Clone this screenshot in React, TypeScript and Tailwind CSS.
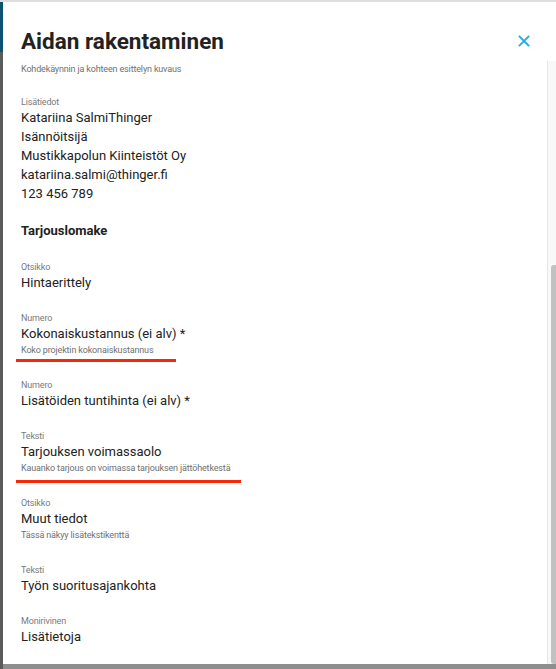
import React from 'react';

type Field = {
    label: string;
    value: string;
    helper?: string;
    mark?: string; // size/offset classes for the red annotation line
};

const fields: Field[] = [
    { label: 'Otsikko', value: 'Hintaerittely' },
    { label: 'Numero', value: 'Kokonaiskustannus (ei alv) *', helper: 'Koko projektin kokonaiskustannus', mark: 'w-[160px] bottom-[-2px]' },
    { label: 'Numero', value: 'Lisätöiden tuntihinta (ei alv) *' },
    { label: 'Teksti', value: 'Tarjouksen voimassaolo', helper: 'Kauanko tarjous on voimassa tarjouksen jättöhetkestä', mark: 'w-[225px] bottom-[-5px]' },
    { label: 'Otsikko', value: 'Muut tiedot', helper: 'Tässä näkyy lisätekstikenttä' },
    { label: 'Teksti', value: 'Työn suoritusajankohta' },
    { label: 'Monirivinen', value: 'Lisätietoja' },
];

const small = 'text-[9px] tracking-[-0.15px]';

const CloseIcon: React.FC<{ className?: string }> = ({ className }) => (
    <svg viewBox="0 0 12 12" className={className} fill="none" stroke="currentColor" strokeWidth="1.8" strokeLinecap="square">
        <path d="M1.5 1.5l9 9M10.5 1.5l-9 9" />
    </svg>
);

const FieldRow: React.FC<{ field: Field }> = ({ field }) => (
    <div className="relative flex flex-col mb-[19px]">
        <div className={`${small} leading-[12px] text-[#7a7a7a]`}>{field.label}</div>
        <div className="text-[13px] leading-[20px] text-[#222]">{field.value}</div>
        {field.helper && (
            <div className={`${small} leading-[13px] mb-[3px] text-[#6f6f6f]`}>{field.helper}</div>
        )}
        {field.mark && (
            <div className={`absolute left-[-5px] h-[3px] bg-[#f5290a] ${field.mark}`} />
        )}
    </div>
);

export default function App() {
    return (
        <div className="w-[556px] h-[669px] bg-[#8e8e8e] flex flex-col overflow-hidden font-['Roboto',sans-serif]">
            <div className="h-[2px] bg-[#dedede] shrink-0" />
            <div className="flex flex-1 min-h-0">
                <div className="w-[3px] flex flex-col shrink-0">
                    <div className="h-[50px] bg-[#0d5270]" />
                    <div className="flex-1 bg-[#5b5b5b]" />
                </div>
                <div className="flex-1 flex flex-col bg-white mb-[5px] min-w-0">
                    <div className="h-[59px] shrink-0 flex items-end justify-between pl-[18px] pr-[26px] pb-[6px]">
                        <h1 className="text-[22.5px] leading-[28px] font-bold text-[#222]">Aidan rakentaminen</h1>
                        <CloseIcon className="w-[12px] h-[12px] text-[#2aa8e2] mb-[8px]" />
                    </div>
                    <div className="flex flex-1 min-h-0">
                        <div className="flex-1 overflow-hidden pl-[18px] pt-[2px]">
                            <div className={`${small} leading-[12px] text-[#6f6f6f]`}>
                                Kohdekäynnin ja kohteen esittelyn kuvaus
                            </div>
                            <div className="mt-[21px]">
                                <div className={`${small} leading-[12px] text-[#7a7a7a]`}>Lisätiedot</div>
                                <div className="text-[13px] leading-[19px] text-[#222]">
                                    <div>Katariina SalmiThinger</div>
                                    <div>Isännöitsijä</div>
                                    <div>Mustikkapolun Kiinteistöt Oy</div>
                                    <div>katariina.salmi@thinger.fi</div>
                                    <div>123 456 789</div>
                                </div>
                            </div>
                            <div className="mt-[18px] mb-[20px] text-[13px] leading-[20px] font-bold text-[#222]">Tarjouslomake</div>
                            {fields.map((f, i) => (
                                <FieldRow key={i} field={f} />
                            ))}
                        </div>
                        <div className="w-[9px] shrink-0 bg-[#f8f8f8] border-l border-[#e6e6e6] flex flex-col">
                            <div className="h-[204px]" />
                            <div className="flex-1 ml-[3px] bg-[#c1c1c1] rounded-l-[3px]" />
                        </div>
                    </div>
                </div>
            </div>
        </div>
    );
}
